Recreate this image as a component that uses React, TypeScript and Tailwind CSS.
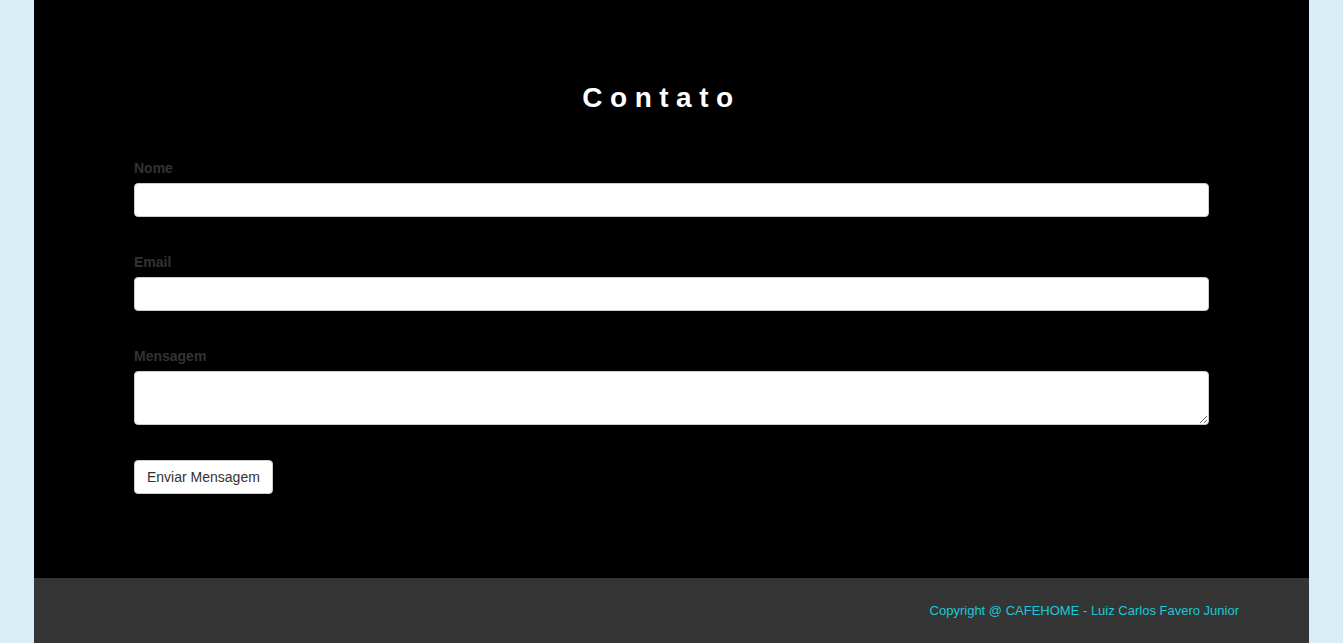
import React from 'react'

const font = { fontFamily: '"Liberation Sans", Arial, Helvetica, sans-serif' }

export default function App() {
  return (
    <div className="min-h-screen bg-[#d9edf7] flex justify-center" style={font}>
      <div className="w-[1275px] flex flex-col">
        <section className="bg-black h-[578px] px-[100px] pt-[81px]">
          <h2 className="text-white text-[28px] font-bold tracking-[7.5px] text-center leading-[34px] mr-[20px]">
            Contato
          </h2>
          <form className="mt-[43px] flex flex-col" onSubmit={(e) => e.preventDefault()}>
            <label className="text-[#333] text-sm font-bold leading-5 mb-[5px]">Nome</label>
            <input
              type="text"
              className="h-[34px] bg-white border border-[#ccc] rounded-[4px] px-3 text-sm outline-none"
            />
            <label className="text-[#333] text-sm font-bold leading-5 mb-[5px] mt-[35px]">Email</label>
            <input
              type="email"
              className="h-[34px] bg-white border border-[#ccc] rounded-[4px] px-3 text-sm outline-none"
            />
            <label className="text-[#333] text-sm font-bold leading-5 mb-[5px] mt-[35px]">Mensagem</label>
            <textarea className="h-[54px] bg-white border border-[#ccc] rounded-[4px] px-3 py-1.5 text-sm outline-none resize-y" />
            <div className="mt-[35px]">
              <button
                type="submit"
                className="h-[34px] px-3 bg-white border border-[#ccc] rounded-[4px] text-sm text-[#333]"
              >
                Enviar Mensagem
              </button>
            </div>
          </form>
        </section>
        <footer className="bg-[#353535] flex-1 flex justify-end items-start pt-[23px] pr-[70px]">
          <p className="text-[#1bc8d6] text-[13px] leading-5">
            Copyright @ CAFEHOME - Luiz Carlos Favero Junior
          </p>
        </footer>
      </div>
    </div>
  )
}
